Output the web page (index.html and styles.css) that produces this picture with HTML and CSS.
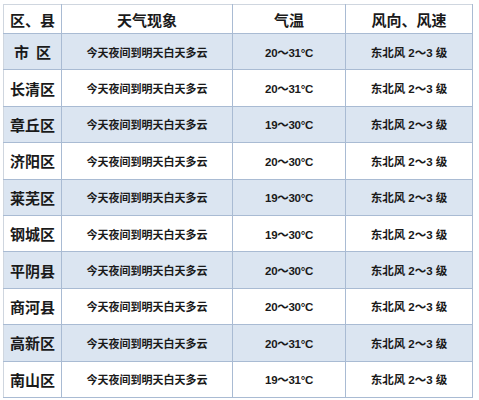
FILE: index.html
```html
<!DOCTYPE html>
<html lang="zh">
<head>
<meta charset="utf-8">
<link rel="stylesheet" href="styles.css">
</head>
<body>
<table class="weather">
  <colgroup>
    <col class="c1"><col class="c2"><col class="c3"><col class="c4">
  </colgroup>
  <thead>
    <tr class="head">
      <th>区、县</th><th>天气现象</th><th>气温</th><th>风向、风速</th>
    </tr>
  </thead>
  <tbody>
    <tr class="alt"><td class="name">市&nbsp;&nbsp;区</td><td class="desc">今天夜间到明天白天多云</td><td class="temp">20～31°C</td><td class="wind">东北风 2～3 级</td></tr>
    <tr><td class="name">长清区</td><td class="desc">今天夜间到明天白天多云</td><td class="temp">20～31°C</td><td class="wind">东北风 2～3 级</td></tr>
    <tr class="alt"><td class="name">章丘区</td><td class="desc">今天夜间到明天白天多云</td><td class="temp">19～30°C</td><td class="wind">东北风 2～3 级</td></tr>
    <tr><td class="name">济阳区</td><td class="desc">今天夜间到明天白天多云</td><td class="temp">20～30°C</td><td class="wind">东北风 2～3 级</td></tr>
    <tr class="alt"><td class="name">莱芜区</td><td class="desc">今天夜间到明天白天多云</td><td class="temp">19～30°C</td><td class="wind">东北风 2～3 级</td></tr>
    <tr><td class="name">钢城区</td><td class="desc">今天夜间到明天白天多云</td><td class="temp">19～30°C</td><td class="wind">东北风 2～3 级</td></tr>
    <tr class="alt"><td class="name">平阴县</td><td class="desc">今天夜间到明天白天多云</td><td class="temp">20～30°C</td><td class="wind">东北风 2～3 级</td></tr>
    <tr><td class="name">商河县</td><td class="desc">今天夜间到明天白天多云</td><td class="temp">20～30°C</td><td class="wind">东北风 2～3 级</td></tr>
    <tr class="alt"><td class="name">高新区</td><td class="desc">今天夜间到明天白天多云</td><td class="temp">20～31°C</td><td class="wind">东北风 2～3 级</td></tr>
    <tr><td class="name">南山区</td><td class="desc">今天夜间到明天白天多云</td><td class="temp">19～31°C</td><td class="wind">东北风 2～3 级</td></tr>
  </tbody>
</table>
</body>
</html>
```
FILE: styles.css
```css
html, body {
  margin: 0;
  padding: 0;
  background: #ffffff;
}
body {
  padding: 4px 0 0 3px;
  font-family: "Liberation Sans", "Noto Sans CJK SC", sans-serif;
  color: #1a1a1a;
}
.weather {
  border-collapse: collapse;
  table-layout: fixed;
  width: 469px;
}
.c1 { width: 58px; }
.c2 { width: 171px; }
.c3 { width: 113px; }
.c4 { width: 127px; }
.weather th,
.weather td {
  border: 1px solid #a9bbd3;
  text-align: center;
  vertical-align: middle;
  padding: 0;
  white-space: nowrap;
}
.weather th {
  height: 28px;
  font-size: 15px;
  font-weight: bold;
  font-family: "Noto Sans CJK SC", sans-serif;
}
.weather td {
  height: 35.4px;
}
.weather tr > :first-child {
  border-left-color: #cfd6df;
}
.weather thead th {
  border-top-color: #cfd6df;
}
.alt td {
  background: #dbe5f1;
}
.name {
  font-size: 15px;
  font-weight: bold;
  font-family: "Noto Sans CJK SC", sans-serif;
}
.desc {
  font-size: 11px;
  font-weight: bold;
  font-family: "Noto Sans CJK SC", sans-serif;
}
.temp {
  font-size: 11.5px;
  font-weight: bold;
  letter-spacing: -0.3px;
}
.wind {
  font-size: 11.5px;
  font-weight: bold;
}
```
